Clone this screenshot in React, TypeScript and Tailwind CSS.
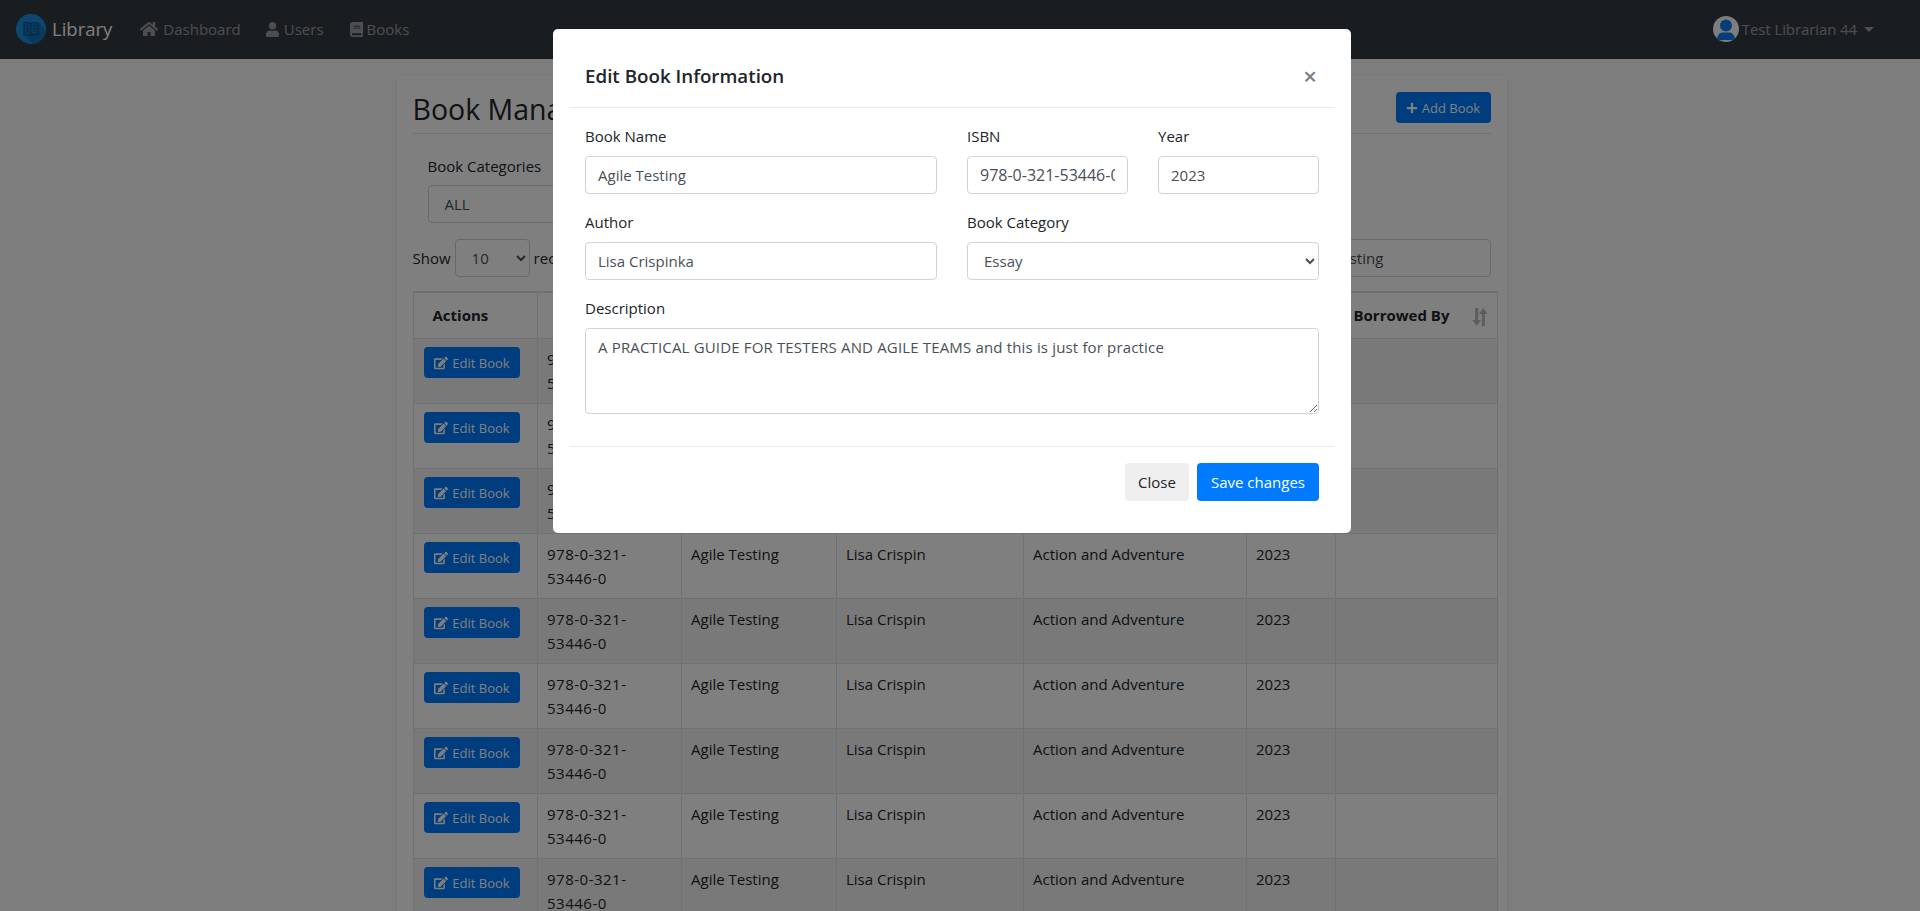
import { FaBook, FaEdit, FaHome, FaPlus, FaUser } from "react-icons/fa";

const headers = ["ISBN", "Book Name", "Author", "Book Category", "Year"];

function SortIcon() {
  return (
    <svg viewBox="0 0 16 18" className="absolute right-[9px] top-[15px] h-[18px] w-[16px] text-[#bbbbbb]" fill="currentColor">
      <path d="M3.2 0h3v12h2.800l-4.300 6-4.300-6h2.800z" />
      <path d="M9.800 6h3v12h-3z" />
      <path d="M11.300 0l4.300 6H7z" />
    </svg>
  );
}

function Logo() {
  return (
    <svg viewBox="0 0 30 30" className="h-[30px] w-[30px] shrink-0">
      <circle cx="15" cy="15" r="15" fill="#1a8fe0" />
      <path d="M8 21l9 9a15 15 0 0 0 13-13l-7-8z" fill="#1273bd" />
      <path d="M8 9c3-1 5-.5 7 .8 2-1.300 4-1.800 7-.8v12c-3-1-5-.5-7 .8-2-1.300-4-1.800-7-.8z" fill="#1273bd" stroke="#0d4f86" strokeWidth="1.200" />
      <path d="M15 10v11.500M10 12h3M10 14.500h3M10 17h3M17 12h3M17 14.500h3M17 17h3" stroke="#0d4f86" strokeWidth="1" fill="none" />
    </svg>
  );
}

function Avatar() {
  return (
    <svg viewBox="0 0 26 26" className="h-[26px] w-[26px] shrink-0">
      <circle cx="13" cy="13" r="13" fill="#fafafa" />
      <clipPath id="av">
        <circle cx="13" cy="13" r="13" />
      </clipPath>
      <g clipPath="url(#av)" fill="#0a7cf0">
        <circle cx="13" cy="9.500" r="6" />
        <path d="M4 24c0-5 3-7.500 6-7.500h6c3 0 6 2.500 6 7.500z" />
      </g>
    </svg>
  );
}

function Row() {
  return (
    <tr className="odd:bg-black/5 [&>td]:border [&>td]:border-[#dee2e6] [&>td]:px-[9.500px] [&>td]:py-[8px] [&>td]:align-top">
      <td>
        <button className="ml-px flex h-[31px] w-[96px] items-center justify-center gap-[4px] rounded bg-[#007bff] pt-px text-[13px] text-white">
          <FaEdit className="text-[14px]" /> Edit Book
        </button>
      </td>
      <td className="tracking-[0.5px]">
        978-0-321-
        <br />
        53446-0
      </td>
      <td>Agile Testing</td>
      <td>Lisa Crispin</td>
      <td>Action and Adventure</td>
      <td>2023</td>
      <td></td>
    </tr>
  );
}

function Field({ label, value, wide }: { label: string; value: string; wide?: boolean }) {
  return (
    <div>
      <label className="mb-2 block leading-6">{label}</label>
      <input
        readOnly
        value={value}
        className={`block h-[38px] w-full rounded border border-[#ced4da] bg-white px-3 text-[#495057] outline-none ${wide ? "text-[16px]" : ""}`}
      />
    </div>
  );
}

export default function App() {
  return (
    <div className="relative h-[911px] overflow-hidden bg-[#fafafa] font-['Open_Sans',sans-serif] text-[15px] leading-6 text-[#212529]">
      <nav className="flex h-[59px] items-center bg-[#343a40] pr-[46px] pl-4 pb-px text-white/50">
        <Logo />
        <span className="ml-[6px] text-[18.500px] text-white">Library</span>
        <a className="ml-[28px] flex items-center gap-[5px]">
          <FaHome className="text-[18px]" /> Dashboard
        </a>
        <a className="ml-[24px] flex items-center gap-[4px]">
          <FaUser className="text-[15px]" /> Users
        </a>
        <a className="ml-[25px] flex items-center gap-[3px]">
          <FaBook className="text-[15px]" /> Books
        </a>
        <div className="ml-auto flex items-center gap-[3px] tracking-[-0.1px]">
          <Avatar /> Test Librarian 44
          <span className="ml-[4px] h-0 w-0 border-x-[5px] border-t-[5px] border-x-transparent border-t-white/50" />
        </div>
      </nav>

      <div className="pr-[17px]">
        <main className="mx-auto mt-[17px] w-[1110px] rounded bg-white p-4 shadow-sm">
          <div className="flex h-[42px] items-start justify-between border-b border-[#dee2e6]">
            <h1 className="-mt-px text-[28.500px] leading-[36px]">Book Management</h1>
            <button className="flex h-[31px] w-[95px] items-center justify-center gap-[4px] rounded bg-[#007bff] text-[13px] text-white">
              <FaPlus className="text-[12px]" /> Add Book
            </button>
          </div>

          <div className="mt-[20px] ml-[15px] w-[240px]">
            <label className="mb-[7px] block leading-6">Book Categories</label>
            <select className="block h-[38px] w-full rounded border border-[#ced4da] bg-white px-3 text-[#495057]">
              <option>ALL</option>
            </select>
          </div>

          <div className="mt-4 flex items-center justify-between">
            <div className="flex items-center gap-[4px]">
              Show
              <select className="h-[38px] w-[75px] rounded border border-[#ced4da] bg-white px-3 text-[#495057]">
                <option>10</option>
              </select>
              records
            </div>
            <div className="flex items-center gap-2">
              Search:
              <input
                readOnly
                value="Agile Testing"
                className="h-[38px] w-[208px] rounded border border-[#ced4da] bg-white px-3 text-[#495057] outline-none"
              />
            </div>
          </div>

          <table className="mt-[14px] w-[1084px] table-fixed border-collapse border-t-2 border-[#dee2e6]">
            <colgroup>
              <col className="w-[124px]" />
              <col className="w-[144px]" />
              <col className="w-[155px]" />
              <col className="w-[187px]" />
              <col className="w-[223px]" />
              <col className="w-[89px]" />
              <col className="w-[162px]" />
            </colgroup>
            <thead>
              <tr className="h-[46px] border-b border-b-[#212529] [&>th]:border-x [&>th]:border-x-[#dee2e6] [&>th]:pl-[19px] [&>th]:text-left [&>th]:font-bold">
                <th>Actions</th>
                {headers.map((h) => (
                  <th key={h}>{h}</th>
                ))}
                <th className="relative">
                  <span className="-ml-px">Borrowed By</span>
                  <SortIcon />
                </th>
              </tr>
            </thead>
            <tbody>
              {Array.from({ length: 10 }, (_, i) => (
                <Row key={i} />
              ))}
            </tbody>
          </table>
        </main>
      </div>

      <div className="absolute inset-0 bg-black/50" />

      <div className="absolute top-[29px] left-[553px] w-[798px] rounded-[5px] bg-white p-4">
        <div className="flex h-[63px] items-center justify-between border-b border-[#e9ecef] px-4 pb-px">
          <h2 className="text-[18.750px] font-semibold">Edit Book Information</h2>
          <button className="mr-[2px] text-[24px] leading-none font-semibold text-[#7f7f7f]">×</button>
        </div>
        <div className="border-b border-[#e9ecef] px-4 pt-4 pb-8">
          <div className="grid grid-cols-[352px_161px_161px] gap-x-[30px] gap-y-4">
            <Field label="Book Name" value="Agile Testing" />
            <Field label="ISBN" value="978-0-321-53446-0" wide />
            <Field label="Year" value="2023" />
            <Field label="Author" value="Lisa Crispinka" />
            <div className="col-span-2">
              <label className="mb-2 block leading-6">Book Category</label>
              <select className="block h-[38px] w-full rounded border border-[#ced4da] bg-white px-3 text-[#495057]">
                <option>Essay</option>
              </select>
            </div>
            <div className="col-span-3">
              <label className="mb-2 block leading-6">Description</label>
              <textarea
                readOnly
                value="A PRACTICAL GUIDE FOR TESTERS AND AGILE TEAMS and this is just for practice"
                className="block h-[86px] w-full rounded border border-[#ced4da] px-3 py-[6px] tracking-[0.16px] text-[#495057] outline-none"
              />
            </div>
          </div>
        </div>
        <div className="flex justify-end gap-2 p-4">
          <button className="h-[38px] w-[64px] rounded bg-[#efefef] text-[#212529]">Close</button>
          <button className="h-[38px] w-[122px] rounded bg-[#007bff] text-white">Save changes</button>
        </div>
      </div>
    </div>
  );
}
